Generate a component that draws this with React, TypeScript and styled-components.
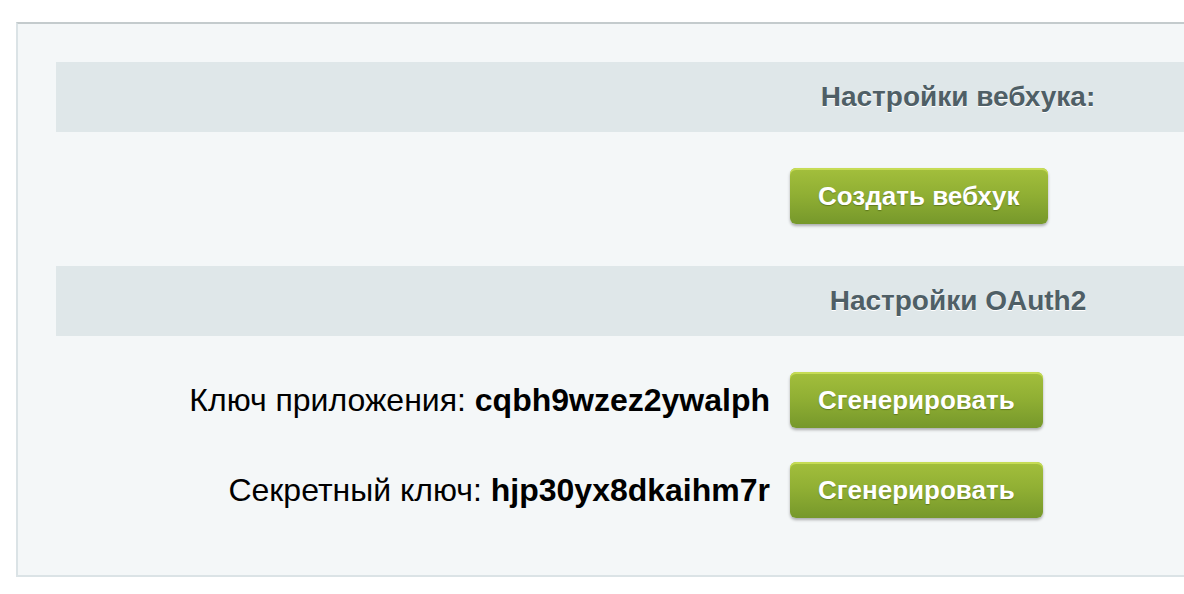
import styled, { createGlobalStyle } from "styled-components";

const GlobalStyle = createGlobalStyle`
    html, body {
        margin: 0;
        padding: 0;
        background: #ffffff;
        overflow: hidden;
    }
    body {
        font-family: "Liberation Sans", Arial, Helvetica, sans-serif;
    }
`;

type KeyRow = {
    label: string;
    value: string;
};

const keys: KeyRow[] = [
    { label: "Ключ приложения:", value: "cqbh9wzez2ywalph" },
    { label: "Секретный ключ:", value: "hjp30yx8dkaihm7r" },
];

export default function App() {
    return (
        <>
            <GlobalStyle />
            <Page>
                <Panel>
                    <SectionHeader>Настройки вебхука:</SectionHeader>
                    <Row $top={36} $bottom={42}>
                        <LabelCell />
                        <ValueCell>
                            <GreenButton type="button">Создать вебхук</GreenButton>
                        </ValueCell>
                    </Row>
                    <SectionHeader>Настройки OAuth2</SectionHeader>
                    <KeyList>
                        {keys.map((k) => (
                            <Row key={k.label} $top={0} $bottom={0}>
                                <LabelCell>
                                    {k.label} <KeyValue>{k.value}</KeyValue>
                                </LabelCell>
                                <ValueCell>
                                    <GreenButton type="button">Сгенерировать</GreenButton>
                                </ValueCell>
                            </Row>
                        ))}
                    </KeyList>
                </Panel>
            </Page>
        </>
    );
}

const Page = styled.div`
    padding: 22px 0 0 16px;
    width: 1860px;
`;

const Panel = styled.div`
    width: 1844px;
    box-sizing: border-box;
    background: #f4f7f8;
    border-top: 2px solid #c4cbcd;
    border-left: 2px solid #dbe3e6;
    border-bottom: 2px solid #dbe3e6;
    padding: 38px 0 57px 38px;
`;

const SectionHeader = styled.div`
    height: 70px;
    background: #dfe7e9;
    display: flex;
    align-items: center;
    justify-content: center;
    font-size: 28px;
    font-weight: bold;
    color: #4f5f66;
    text-shadow: 0 1px 0 #ffffff;
`;

const Row = styled.div<{ $top: number; $bottom: number }>`
    display: grid;
    grid-template-columns: 724px 1fr;
    align-items: center;
    padding: ${(p) => p.$top}px 0 ${(p) => p.$bottom}px;
`;

const KeyList = styled.div`
    display: flex;
    flex-direction: column;
    gap: 34px;
    padding-top: 36px;
`;

const LabelCell = styled.div`
    text-align: right;
    padding-right: 10px;
    font-size: 32px;
    color: #000000;
    white-space: nowrap;
`;

const KeyValue = styled.strong`
    font-weight: bold;
`;

const ValueCell = styled.div`
    padding-left: 10px;
`;

const GreenButton = styled.button`
    height: 56px;
    padding: 0 28px;
    border: none;
    border-radius: 6px;
    background: linear-gradient(to bottom, #a3bf3c 0%, #8fae33 50%, #76982b 100%);
    box-shadow: inset 0 2px 0 #c6dc55, 0 2px 3px rgba(0, 0, 0, 0.3);
    color: #ffffff;
    font-family: "Liberation Sans", Arial, Helvetica, sans-serif;
    font-size: 26px;
    font-weight: bold;
    text-shadow: 0 1px 1px rgba(60, 80, 10, 0.5);
    cursor: pointer;
`;
